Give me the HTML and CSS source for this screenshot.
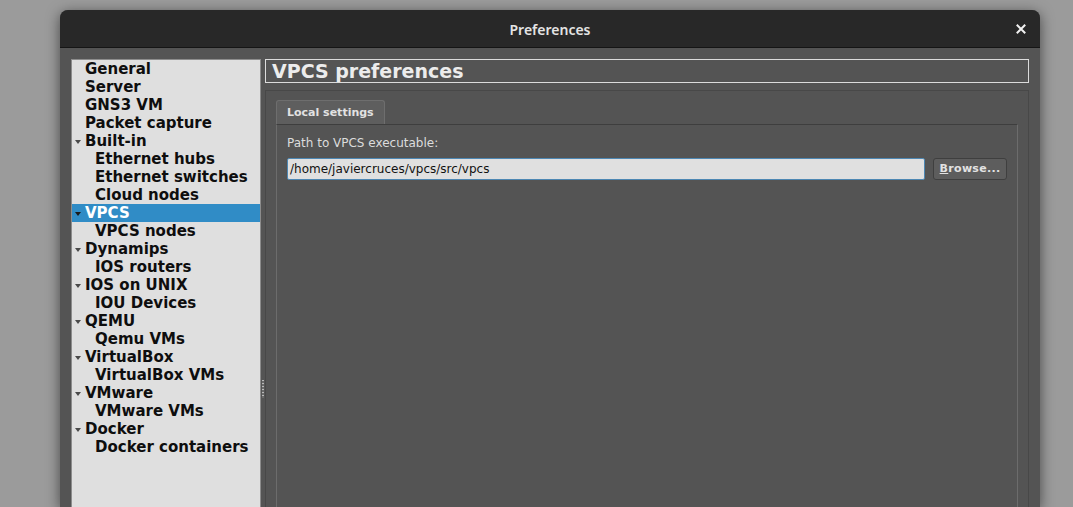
FILE: index.html
```html
<!DOCTYPE html>
<html>
<head>
<meta charset="utf-8">
<link rel="stylesheet" href="styles.css">
</head>
<body>
<div class="window">
  <div class="titlebar">
    <span class="title">Preferences</span>
    <svg class="close" width="10" height="10" viewBox="0 0 10 10"><path d="M1.5 1.5 L8.5 8.5 M8.5 1.5 L1.5 8.5" stroke="#f2f2f2" stroke-width="2" stroke-linecap="square"/></svg>
  </div>
  <div class="content">
    <div class="tree">
      <div class="row top">General</div>
      <div class="row top">Server</div>
      <div class="row top">GNS3 VM</div>
      <div class="row top">Packet capture</div>
      <div class="row top exp">Built-in</div>
      <div class="row child">Ethernet hubs</div>
      <div class="row child">Ethernet switches</div>
      <div class="row child">Cloud nodes</div>
      <div class="row top exp sel">VPCS</div>
      <div class="row child">VPCS nodes</div>
      <div class="row top exp">Dynamips</div>
      <div class="row child">IOS routers</div>
      <div class="row top exp">IOS on UNIX</div>
      <div class="row child">IOU Devices</div>
      <div class="row top exp">QEMU</div>
      <div class="row child">Qemu VMs</div>
      <div class="row top exp">VirtualBox</div>
      <div class="row child">VirtualBox VMs</div>
      <div class="row top exp">VMware</div>
      <div class="row child">VMware VMs</div>
      <div class="row top exp">Docker</div>
      <div class="row child">Docker containers</div>
    </div>
    <div class="splitter"><div class="grip"></div></div>
    <div class="main">
      <div class="header">VPCS preferences</div>
      <div class="frame">
        <div class="tabs"><div class="tab">Local settings</div></div>
        <div class="pane">
          <div class="label">Path to VPCS executable:</div>
          <div class="field-row">
            <div class="input">/home/javiercruces/vpcs/src/vpcs</div>
            <div class="button"><u>B</u>rowse...</div>
          </div>
        </div>
      </div>
    </div>
  </div>
</div>
</body>
</html>
```
FILE: styles.css
```css
html, body {
  margin: 0;
  padding: 0;
  background: #9b9b9b;
  overflow: hidden;
  height: 507px;
}
body {
  font-family: "DejaVu Sans", sans-serif;
}
.window {
  margin: 10px 0 0 60px;
  width: 980px;
  height: 497px;
  background: #545454;
  border-radius: 8px 8px 0 0;
  box-shadow: 0 3px 14px rgba(0,0,0,0.55);
  display: flex;
  flex-direction: column;
}
.titlebar {
  height: 37px;
  background: #282828;
  border-bottom: 1px solid #151515;
  border-radius: 8px 8px 0 0;
  display: flex;
  align-items: center;
  justify-content: center;
  position: relative;
}
.title {
  font-family: "Noto Sans", sans-serif;
  font-weight: 600;
  font-size: 14px;
  color: #e4e4e4;
  margin-top: 1px;
}
.close {
  position: absolute;
  right: 14px;
  top: 14px;
}
.content {
  flex: 1;
  display: flex;
  padding: 11px 11px 0 11px;
  min-height: 0;
}
.tree {
  width: 188px;
  background: #dfdfdf;
  border: 1px solid #8c8c8c;
  border-bottom: none;
  display: flex;
  flex-direction: column;
}
.row {
  height: 18px;
  line-height: 18px;
  font-size: 15px;
  font-weight: bold;
  color: #0e0e0e;
  white-space: nowrap;
  position: relative;
}
.row.top { padding-left: 13px; }
.row.child { padding-left: 23px; }
.row.exp::before {
  content: "";
  position: absolute;
  left: 3px;
  top: 8px;
  border-left: 3.5px solid transparent;
  border-right: 3.5px solid transparent;
  border-top: 4px solid #4a4a4a;
}
.row.sel {
  background: #308cc6;
  color: #ffffff;
}
.row.sel::before { border-top-color: #1a1a1a; }
.splitter {
  width: 4px;
  display: flex;
  justify-content: center;
}
.grip {
  width: 2px;
  height: 18px;
  margin-top: 321px;
  background: repeating-linear-gradient(to bottom, #b8b8b8 0 1px, #6a6a6a 1px 3px);
}
.main {
  flex: 1;
  display: flex;
  flex-direction: column;
}
.header {
  height: 22px;
  border: 1px solid #dcdcdc;
  padding-left: 6px;
  font-size: 19px;
  font-weight: bold;
  color: #ececec;
  line-height: 22px;
}
.frame {
  margin-top: 7px;
  flex: 1;
  border: 1px solid #484848;
  border-bottom: none;
  padding: 9px 10px 0 10px;
  display: flex;
  flex-direction: column;
}
.tabs {
  display: flex;
}
.tab {
  background: #5e5e5e;
  border: 1px solid #6e6e6e;
  border-bottom: none;
  border-radius: 3px 3px 0 0;
  font-size: 11px;
  font-weight: bold;
  color: #e2e2e2;
  line-height: 24px;
  padding-left: 10px;
  box-sizing: border-box;
  width: 109px;
  height: 24px;
}
.pane {
  flex: 1;
  border: 1px solid #6c6c6c;
  border-top-color: #3e3e3e;
  border-bottom: none;
  padding: 10px 10px 0 10px;
}
.label {
  font-size: 12px;
  color: #dcdcdc;
  height: 17px;
  line-height: 17px;
}
.field-row {
  margin-top: 6px;
  display: flex;
  gap: 8px;
}
.input {
  flex: 1;
  height: 20px;
  line-height: 20px;
  background: #e0e0e0;
  border: 1px solid #4d87b3;
  border-radius: 2px;
  font-size: 12px;
  color: #111;
  padding-left: 2px;
}
.button {
  width: 72px;
  height: 20px;
  line-height: 20px;
  background: #5d5d5d;
  border: 1px solid #3f3f3f;
  border-radius: 3px;
  font-size: 11px;
  font-weight: bold;
  color: #e2e2e2;
  text-align: center;
  letter-spacing: 0.3px;
}
.button u { text-decoration-thickness: 1px; }
```
